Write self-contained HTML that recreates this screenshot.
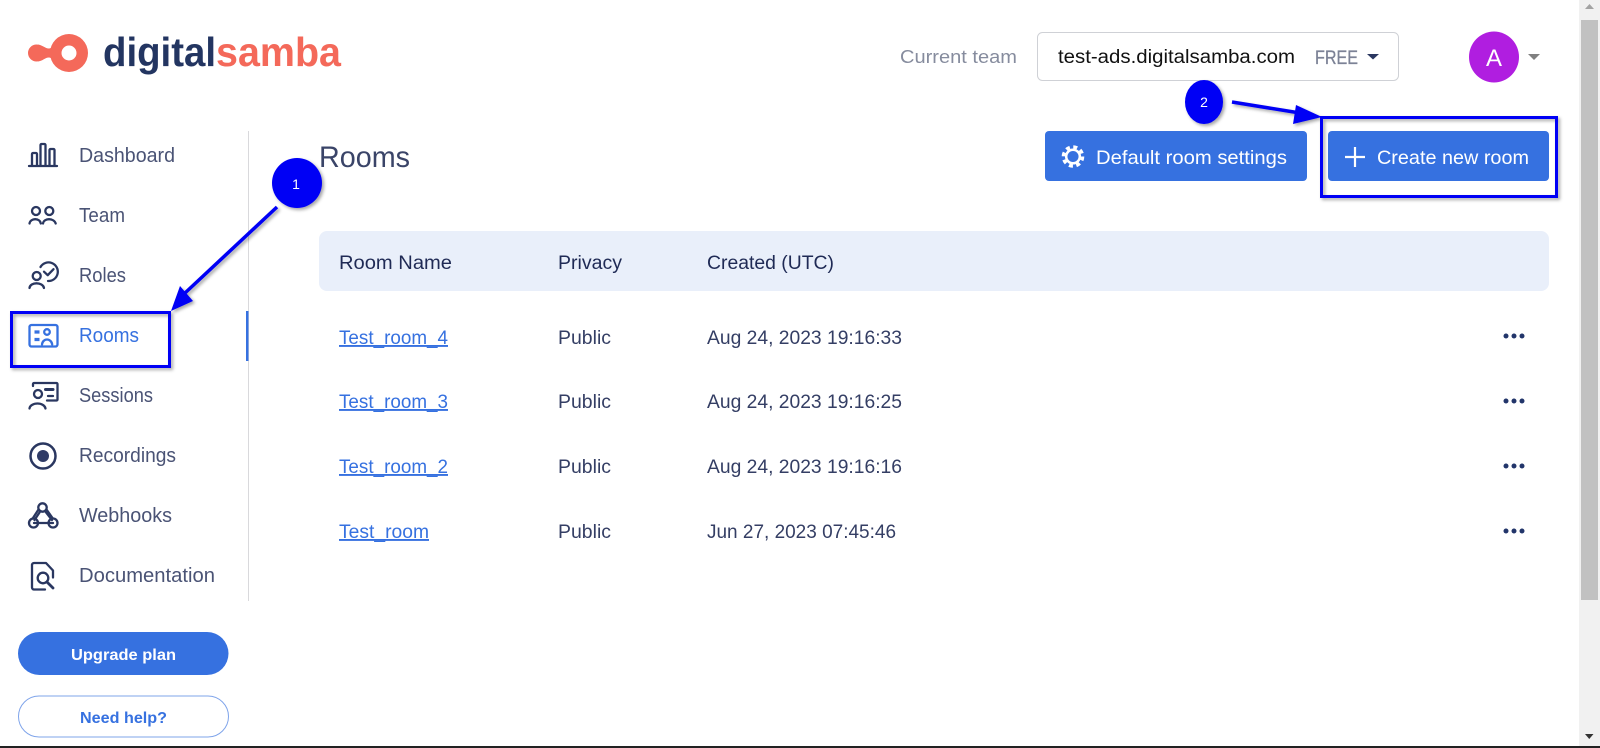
<!DOCTYPE html>
<html lang="en"><head><meta charset="utf-8"><title>Rooms</title>
<style>
html,body{margin:0;padding:0;background:#fff;width:1600px;height:748px;overflow:hidden}
svg{display:block;position:absolute;left:0;top:0}
text{font-family:"Liberation Sans",sans-serif}
.nav{font-size:20px;fill:#4a5375}
.th{font-size:19px;fill:#1f2a55}
.td{font-size:19px;fill:#343e64}
.lnk{font-size:19px;fill:#3671e0;text-decoration:underline}
.ic{fill:none;stroke:#2a3760;stroke-width:2.3;stroke-linecap:round;stroke-linejoin:round}
.ib{fill:none;stroke:#3671e0;stroke-width:2.3;stroke-linecap:round;stroke-linejoin:round}
</style></head><body>
<svg width="1600" height="748" viewBox="0 0 1600 748" xmlns="http://www.w3.org/2000/svg">
<defs>
<filter id="sh" x="-10%" y="-10%" width="125%" height="125%"><feDropShadow dx="2" dy="2" stdDeviation="1.5" flood-color="#000" flood-opacity=".35"/></filter>
</defs>

<!-- logo -->
<g fill="#f4695a">
<path fill-rule="evenodd" d="M69 34a19 19 0 1 1 0 38 19 19 0 0 1 0-38zm0 11.500a7.500 7.500 0 1 0 0 15 7.500 7.500 0 0 0 0-15z"/>
<circle cx="36.500" cy="53" r="8.500"/>
<path d="M38 44.600c5 .5 7 3.900 11 3.900 2 0 4-2 6-5.500v20c-2-3.500-4-5.500-6-5.500-4 0-6 3.400-11 3.900z"/>
</g>
<text x="103" y="66" font-size="41" font-weight="700" fill="#233561" textLength="113" lengthAdjust="spacingAndGlyphs">digital</text>
<text x="216" y="66" font-size="41" font-weight="700" fill="#f4695a" textLength="125" lengthAdjust="spacingAndGlyphs">samba</text>

<!-- top right -->
<text x="900" y="63" font-size="18" fill="#868c9e" textLength="117" lengthAdjust="spacingAndGlyphs">Current team</text>
<rect x="1037.500" y="32.500" width="361" height="48" rx="5" fill="#fff" stroke="#cfd1d6"/>
<text x="1058" y="63" font-size="19" fill="#111" textLength="237" lengthAdjust="spacingAndGlyphs">test-ads.digitalsamba.com</text>
<text x="1315" y="64" font-size="19" fill="#7c8296" stroke="#7c8296" stroke-width=".3" textLength="43" lengthAdjust="spacingAndGlyphs">FREE</text>
<path d="M1367 54h12l-6 5.500z" fill="#2a3760"/>
<ellipse cx="1494" cy="57" rx="25" ry="25.500" fill="#b01ee0"/>
<text x="1494" y="66" font-size="24" fill="#fff" text-anchor="middle">A</text>
<path d="M1528 54h12l-6 6z" fill="#808080"/>

<!-- sidebar nav text -->
<text class="nav" x="79" y="162" textLength="96" lengthAdjust="spacingAndGlyphs">Dashboard</text>
<text class="nav" x="79" y="222" textLength="46" lengthAdjust="spacingAndGlyphs">Team</text>
<text class="nav" x="79" y="282" textLength="47" lengthAdjust="spacingAndGlyphs">Roles</text>
<text class="nav" x="79" y="342" textLength="60" lengthAdjust="spacingAndGlyphs" style="fill:#3671e0">Rooms</text>
<text class="nav" x="79" y="402" textLength="74" lengthAdjust="spacingAndGlyphs">Sessions</text>
<text class="nav" x="79" y="462" textLength="97" lengthAdjust="spacingAndGlyphs">Recordings</text>
<text class="nav" x="79" y="522" textLength="93" lengthAdjust="spacingAndGlyphs">Webhooks</text>
<text class="nav" x="79" y="582" textLength="136" lengthAdjust="spacingAndGlyphs">Documentation</text>

<!-- sidebar icons -->
<path class="ic" d="M29 166h28M32 165v-11a1 1 0 0 1 1-1h3a1 1 0 0 1 1 1v11M40.500 165v-20a1 1 0 0 1 1-1h3a1 1 0 0 1 1 1v20M49.500 165v-15a1 1 0 0 1 1-1h3a1 1 0 0 1 1 1v15"/>
<g class="ic"><circle cx="36" cy="211" r="4"/><circle cx="49.300" cy="211" r="4"/><path d="M29.500 223.500c.5-2.800 3-4.300 5.700-4.300s5.200 1.500 5.600 4.300M43 223.500c.5-2.800 3-4.300 6-4.300s5.800 1.500 6.700 4.300"/></g>
<g class="ic"><circle cx="36.700" cy="276" r="4"/><path d="M29.500 288c.3-3 3.500-4.700 7-4.700s7 1.700 7.500 4.700M40.500 267a9.300 9.300 0 1 1 7.500 14M44 271.700l3.700 3.500 5.800-6"/></g>
<g class="ib"><rect x="29.500" y="325" width="28" height="21.500" rx="2"/><path d="M34.500 332h5M34.500 339.500h5" stroke-width="3.200" stroke-linecap="butt"/><circle cx="47" cy="332" r="2.800"/><path d="M42 344.500c.3-3 2.500-5 5-5s4.800 2 5.200 5"/></g>
<g class="ic"><path d="M33 386v-2a1 1 0 0 1 1-1h22.500a1 1 0 0 1 1 1v15.500a1 1 0 0 1-1 1H47"/><circle cx="38" cy="394" r="4"/><path d="M29.500 408.500c.3-3 4-5 8-5s7.500 2 8 5"/><path d="M45.500 389.500h7.500" stroke-width="3"/><path d="M48 396h5"/></g>
<circle cx="43" cy="456" r="12.500" fill="none" stroke="#2a3760" stroke-width="2.500"/><circle cx="43" cy="456" r="6" fill="#2f3b66"/>
<g class="ic" stroke-width="2.600"><circle cx="42.500" cy="507.500" r="4.200"/><circle cx="33.500" cy="523" r="4.500"/><circle cx="53" cy="523" r="4.500"/><path d="M40.500 511l-6 9M45 511l7 9M34 523h19"/><path d="M38.500 509.500l-5.500 8.500M46.500 509.500l6 8.500"/></g>
<g class="ic"><path d="M45 589.500H34a2 2 0 0 1-2-2V565a2 2 0 0 1 2-2h12l7 7.500v7"/><circle cx="43" cy="578" r="5.300"/><path d="M47 582l6 6" stroke-width="2.800"/></g>

<!-- sidebar divider -->
<rect x="248" y="131" width="1" height="470" fill="#d9d9dc"/>
<rect x="246" y="311" width="2.500" height="50" fill="#3671e0"/>

<!-- sidebar buttons -->
<rect x="18" y="632" width="210.500" height="43" rx="21.500" fill="#3671e0"/>
<text x="123.500" y="660" font-size="16" font-weight="700" fill="#fff" text-anchor="middle" textLength="105" lengthAdjust="spacingAndGlyphs">Upgrade plan</text>
<rect x="18.500" y="696" width="210" height="41" rx="20.500" fill="#fff" stroke="#7fa4ea" stroke-width="1"/>
<text x="123.500" y="723" font-size="16" font-weight="700" fill="#3671e0" text-anchor="middle" textLength="87" lengthAdjust="spacingAndGlyphs">Need help?</text>

<!-- main header -->
<text x="319" y="167" font-size="30" fill="#3a4468" textLength="91" lengthAdjust="spacingAndGlyphs">Rooms</text>
<rect x="1045" y="131" width="262" height="50" rx="4" fill="#3671e0"/>
<g transform="translate(1073 156.500)" fill="none" stroke="#fff"><circle r="6.800" stroke-width="2.500"/><circle r="9.500" stroke-width="3.600" stroke-dasharray="4 3.460"/></g>
<text x="1096" y="164" font-size="19.500" fill="#fff" textLength="191" lengthAdjust="spacingAndGlyphs">Default room settings</text>
<rect x="1328" y="131" width="221" height="50" rx="4" fill="#3671e0"/>
<path d="M1355 147v20M1345 157h20" stroke="#fff" stroke-width="2.200" fill="none"/>
<text x="1377" y="164" font-size="19.500" fill="#fff" textLength="152" lengthAdjust="spacingAndGlyphs">Create new room</text>

<!-- table -->
<rect x="319" y="231" width="1230" height="60" rx="8" fill="#e9effa"/>
<text class="th" x="339" y="269" textLength="113" lengthAdjust="spacingAndGlyphs">Room Name</text>
<text class="th" x="558" y="269" textLength="64" lengthAdjust="spacingAndGlyphs">Privacy</text>
<text class="th" x="707" y="269" textLength="127" lengthAdjust="spacingAndGlyphs">Created (UTC)</text>

<text class="lnk" x="339" y="344" textLength="109" lengthAdjust="spacingAndGlyphs">Test_room_4</text>
<text class="td" x="558" y="344" textLength="53" lengthAdjust="spacingAndGlyphs">Public</text>
<text class="td" x="707" y="344" textLength="195" lengthAdjust="spacingAndGlyphs">Aug 24, 2023 19:16:33</text>
<text class="lnk" x="339" y="408" textLength="109" lengthAdjust="spacingAndGlyphs">Test_room_3</text>
<text class="td" x="558" y="408" textLength="53" lengthAdjust="spacingAndGlyphs">Public</text>
<text class="td" x="707" y="408" textLength="195" lengthAdjust="spacingAndGlyphs">Aug 24, 2023 19:16:25</text>
<text class="lnk" x="339" y="473" textLength="109" lengthAdjust="spacingAndGlyphs">Test_room_2</text>
<text class="td" x="558" y="473" textLength="53" lengthAdjust="spacingAndGlyphs">Public</text>
<text class="td" x="707" y="473" textLength="195" lengthAdjust="spacingAndGlyphs">Aug 24, 2023 19:16:16</text>
<text class="lnk" x="339" y="538" textLength="90" lengthAdjust="spacingAndGlyphs">Test_room</text>
<text class="td" x="558" y="538" textLength="53" lengthAdjust="spacingAndGlyphs">Public</text>
<text class="td" x="707" y="538" textLength="189" lengthAdjust="spacingAndGlyphs">Jun 27, 2023 07:45:46</text>

<g fill="#22356a">
<circle cx="1506" cy="336" r="2.500"/><circle cx="1514" cy="336" r="2.500"/><circle cx="1522" cy="336" r="2.500"/>
<circle cx="1506" cy="401" r="2.500"/><circle cx="1514" cy="401" r="2.500"/><circle cx="1522" cy="401" r="2.500"/>
<circle cx="1506" cy="466" r="2.500"/><circle cx="1514" cy="466" r="2.500"/><circle cx="1522" cy="466" r="2.500"/>
<circle cx="1506" cy="531" r="2.500"/><circle cx="1514" cy="531" r="2.500"/><circle cx="1522" cy="531" r="2.500"/>
</g>

<!-- annotations -->
<g filter="url(#sh)">
<rect x="11.500" y="312.500" width="158" height="54" fill="none" stroke="#0000f5" stroke-width="3"/>
<rect x="1321.500" y="117.500" width="235" height="79" fill="none" stroke="#0000f5" stroke-width="3"/>
<circle cx="297" cy="183" r="25" fill="#0000f5"/>
<ellipse cx="1204" cy="102" rx="19" ry="22" fill="#0000f5"/>
<path d="M277 207l-92 86" stroke="#0000f5" stroke-width="3.500" fill="none"/>
<path d="M171 311l9-25 13 15z" fill="#0000f5"/>
<path d="M1232 102l68 11" stroke="#0000f5" stroke-width="3.500" fill="none"/>
<path d="M1322 117l-26-12-3 19z" fill="#0000f5"/>
</g>
<text x="296" y="189" font-size="14" fill="#fff" text-anchor="middle">1</text>
<text x="1204" y="107" font-size="14" fill="#fff" text-anchor="middle">2</text>

<!-- scrollbar -->
<rect x="1579" y="0" width="21" height="746" fill="#f1f1f1"/>
<rect x="1581" y="20" width="17" height="580" fill="#c1c1c1"/>
<path d="M1585 9l4.500-5 4.500 5z" fill="#a3a3a3"/>
<path d="M1585 734h8.500l-4.250 5z" fill="#333"/>
<rect x="0" y="746" width="1600" height="2" fill="#222"/>
</svg>
</body></html>
